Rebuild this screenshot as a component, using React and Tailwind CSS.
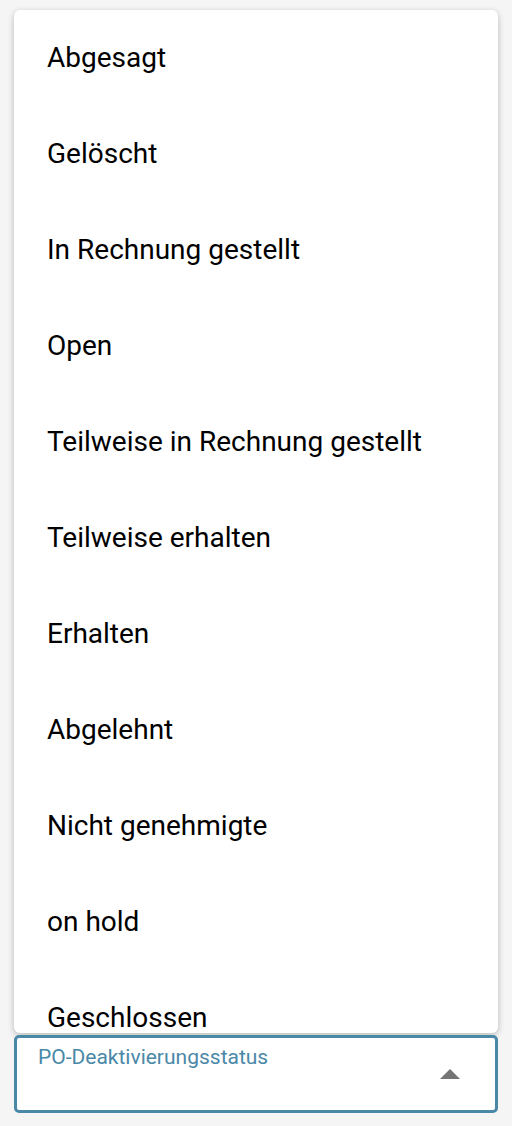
import React from "react";

const options = [
  "Abgesagt",
  "Gelöscht",
  "In Rechnung gestellt",
  "Open",
  "Teilweise in Rechnung gestellt",
  "Teilweise erhalten",
  "Erhalten",
  "Abgelehnt",
  "Nicht genehmigte",
  "on hold",
  "Geschlossen",
];

export default function App() {
  return (
    <div
      className="w-[512px] h-[1126px] bg-[#f5f5f5] flex flex-col px-[14px] pt-[10px]"
      style={{ fontFamily: "Roboto, sans-serif" }}
    >
      {/* Menu list */}
      <div className="h-[1023px] bg-white rounded-[6px] shadow-[0_2px_6px_rgba(0,0,0,0.25)] overflow-hidden">
        <ul>
          {options.map((opt) => (
            <li
              key={opt}
              className="h-[96px] flex items-center px-[33px] text-[28px] text-black"
            >
              {opt}
            </li>
          ))}
        </ul>
      </div>

      {/* Select field */}
      <div className="mt-[2px] h-[78px] bg-white border-[3px] border-[#4a88a8] rounded-[5px] relative pl-[21px] pt-[6px]">
        <span className="text-[21px] text-[#4a88a8] leading-[26px]">PO-Deaktivierungsstatus</span>
        <svg
          className="absolute right-[35px] top-[31px]"
          width="20"
          height="10"
          viewBox="0 0 20 10"
        >
          <path d="M0 10 L10 0 L20 10 Z" fill="#757575" />
        </svg>
      </div>
    </div>
  );
}
